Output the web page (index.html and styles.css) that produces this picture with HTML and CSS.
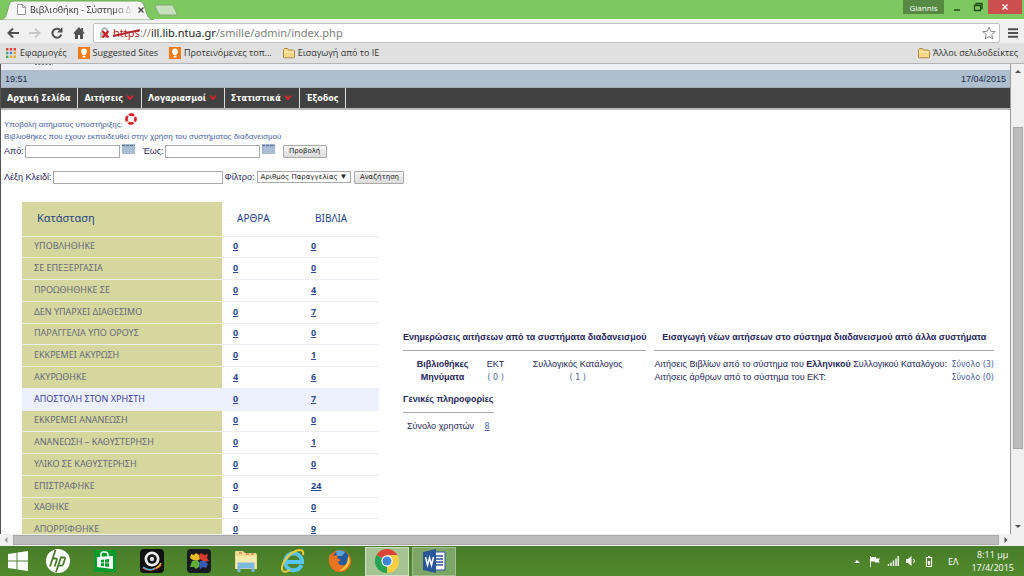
FILE: index.html
```html
<!DOCTYPE html>
<html lang="el">
<head>
<meta charset="utf-8">
<title>Βιβλιοθήκη - Σύστημα Διαδανεισμού</title>
<link rel="stylesheet" href="styles.css">
</head>
<body>
<div class="desktop">
  <header class="titlebar">
    <div class="tab">
      <svg class="tab-shape" viewBox="0 0 160 20" preserveAspectRatio="none"><path d="M0 20C6 19 6 16 8 10C10 3 10 1 15 1H142C148 1 149 3 151 9C153 16 154 19 160 20Z" fill="#f4f5f4" stroke="#6aa653" stroke-width="1"/></svg>
      <svg class="page-icon" viewBox="0 0 9 11"><path d="M.5.5h5l3 3v7h-8zM5.500 .5v3h3" fill="#fff" stroke="#999"/></svg>
      <span class="tab-title">Βιβλιοθήκη - Σύστημα Δια</span>
      <button class="tab-close" aria-label="Κλείσιμο καρτέλας"><svg viewBox="0 0 6 6"><path d="M.5.5l5 5M5.500 .5l-5 5" stroke="#444" stroke-width="1.300"/></svg></button>
    </div>
    <button class="new-tab" aria-label="Νέα καρτέλα"><svg viewBox="0 0 24 12"><path d="M1 1h16q2 0 3 2l3 7q0 1-1 1H7q-2 0-3-2L1 2z" fill="#c6dfbc" stroke="#84ac72"/></svg></button>
    <div class="window-controls">
      <button class="user">Giannis</button>
      <button class="ctl" aria-label="Ελαχιστοποίηση"><svg viewBox="0 0 10 10"><path d="M2 8h6" stroke="#244b19" stroke-width="1.500"/></svg></button>
      <button class="ctl" aria-label="Επαναφορά"><svg viewBox="0 0 10 10"><path d="M1.500 3.500h6v5h-6zM3 3V1.500h6v5H8" fill="none" stroke="#244b19" stroke-width="1.300"/></svg></button>
      <button class="ctl ctl-close" aria-label="Κλείσιμο"><svg viewBox="0 0 10 10"><path d="M2.500 2.500l5 5m0-5l-5 5" stroke="#fff" stroke-width="1.300"/></svg></button>
    </div>
  </header>

  <div class="toolbar">
    <button class="nav" aria-label="Πίσω"><svg viewBox="0 0 12 12"><path d="M12 6H2M6 1.500L1.500 6 6 10.500" fill="none" stroke="#505050" stroke-width="2"/></svg></button>
    <button class="nav" aria-label="Εμπρός"><svg viewBox="0 0 12 12"><path d="M0 6h10M6 1.500L10.500 6 6 10.500" fill="none" stroke="#c8c8c8" stroke-width="2"/></svg></button>
    <button class="nav" aria-label="Ανανέωση"><svg viewBox="0 0 12 12"><path d="M9.500 3.300A4.500 4.500 0 1 0 10.300 7.500" fill="none" stroke="#505050" stroke-width="2"/><path d="M11.500 0v5.500H6z" fill="#505050"/></svg></button>
    <button class="nav" aria-label="Αρχική"><svg viewBox="0 0 12 12"><path d="M6 0L0 6.500h2V12h3V8h2v4h3V6.500h2L10 4.200V1H8.300v1.500z" fill="#505050"/></svg></button>
    <div class="address">
      <svg class="lock" viewBox="0 0 11 12"><path d="M3 6V3.500a2.500 2.500 0 0 1 5 0V6" fill="none" stroke="#aaa" stroke-width="1.500"/><path d="M1 5h8v6H1z" fill="#bbb"/><path d="M3.500 4l6 6.500m0-6.500l-6 6.500" stroke="#d01c1c" stroke-width="2"/></svg>
      <div class="url"><span class="scheme">https<svg viewBox="0 0 28 8" preserveAspectRatio="none"><path d="M0 7L28 1" stroke="#b3272d" stroke-width="1.800"/></svg></span><span class="dim">://</span><b>ill.lib.ntua.gr</b><span class="dim">/smille/admin/index.php</span></div>
      <button class="star" aria-label="Σελιδοδείκτης"><svg viewBox="0 0 14 14"><path d="M7 1l1.700 4.300 4.600.3-3.600 2.900 1.200 4.500L7 10.500 3.100 13l1.200-4.500L.7 5.600l4.600-.3z" fill="#fff" stroke="#888"/></svg></button>
    </div>
    <button class="burger" aria-label="Μενού"><svg viewBox="0 0 10 10"><path d="M0 1.200h10M0 5h10M0 8.800h10" stroke="#505050" stroke-width="2"/></svg></button>
  </div>

  <nav class="bookmarks">
    <a href="#"><svg class="bm" viewBox="0 0 10 10"><g><path d="M0 0h2.400v2.400H0zM3.800 0h2.400v2.400H3.800zM7.600 0H10v2.400H7.600z" fill="#db4437"/><path d="M0 3.800h2.400v2.400H0z" fill="#4aa564"/><path d="M3.800 3.800h2.400v2.400H3.800z" fill="#4285f4"/><path d="M7.600 3.800H10v2.400H7.600zM3.800 7.600h2.400V10H3.800zM7.600 7.600H10V10H7.600z" fill="#e9a92a"/><path d="M0 7.600h2.400V10H0z" fill="#4aa564"/></g></svg>Εφαρμογές</a>
    <a href="#"><svg class="bm-lg" viewBox="0 0 12 12"><path d="M0 0h12v12H0z" fill="#f47a16"/><path d="M6 1.500a3 3 0 0 0-1.700 5.500L4.500 8h3l.2-1A3 3 0 0 0 6 1.500zM4.600 8.800h2.800v1.600H4.600z" fill="#fff"/></svg>Suggested Sites</a>
    <a href="#"><svg class="bm-lg" viewBox="0 0 12 12"><path d="M0 0h12v12H0z" fill="#f47a16"/><path d="M6 1.500a3 3 0 0 0-1.700 5.500L4.500 8h3l.2-1A3 3 0 0 0 6 1.500zM4.600 8.800h2.800v1.600H4.600z" fill="#fff"/></svg>Προτεινόμενες τοπ...</a>
    <a href="#"><svg class="bm-lg" viewBox="0 0 12 12"><path d="M.5 10V2.500l1-1h3l1 1.500h5l1 1V10q0 .8-.8.8H1.300Q.5 10.800.5 10z" fill="#f7d789" stroke="#b08a3c"/><path d="M1 5h10" stroke="#fff0bd"/></svg>Εισαγωγή από το IE</a>
    <a href="#" class="other"><svg class="bm-lg" viewBox="0 0 12 12"><path d="M.5 10V2.500l1-1h3l1 1.500h5l1 1V10q0 .8-.8.8H1.300Q.5 10.800.5 10z" fill="#f7d789" stroke="#b08a3c"/><path d="M1 5h10" stroke="#fff0bd"/></svg>Άλλοι σελιδοδείκτες</a>
  </nav>

  <div class="viewport">
    <main class="page">
      <div class="strip"><svg viewBox="0 0 18 2"><path d="M0 .5h18" stroke="#777" stroke-dasharray="2 1.500"/></svg></div>
      <div class="datebar"><span>19:51</span><span>17/04/2015</span></div>
      <nav class="menu">
        <a href="#">Αρχική Σελίδα</a>
        <a href="#">Αιτήσεις <svg viewBox="0 0 8 6"><path d="M0 .5h2L4 2 6 .5h2L4 5.500z" fill="#d8232a"/></svg></a>
        <a href="#">Λογαριασμοί <svg viewBox="0 0 8 6"><path d="M0 .5h2L4 2 6 .5h2L4 5.500z" fill="#d8232a"/></svg></a>
        <a href="#">Στατιστικά <svg viewBox="0 0 8 6"><path d="M0 .5h2L4 2 6 .5h2L4 5.500z" fill="#d8232a"/></svg></a>
        <a href="#">Έξοδος</a>
      </nav>
      <div class="links">
        <a href="#">Υποβολή αιτήματος υποστήριξης: <svg viewBox="0 0 12 12"><circle cx="6" cy="6" r="4.500" fill="none" stroke="#f3c3c3" stroke-width="2.600"/><circle cx="6" cy="6" r="4.500" fill="none" stroke="#d91c24" stroke-width="2.600" stroke-dasharray="5 2.070" stroke-dashoffset="2.500"/></svg></a>
        <a href="#">Βιβλιοθήκες που έχουν εκπαιδευθεί στην χρήση του συστήματος διαδανεισμού</a>
      </div>
      <form class="row dates">
        <label for="from">Από:</label><input id="from" class="date" type="text">
        <button type="button" class="cal" aria-label="Ημερολόγιο από"><svg viewBox="0 0 13 10"><path d="M0 0h13v10H0z" fill="#a3b9d2"/><path d="M0 1.500h13" stroke="#5d7693" stroke-dasharray="3 1"/><path d="M2 4.500h10M2 6.500h10M2 8.500h10" stroke="#b6c8dc" stroke-dasharray="2 1"/></svg></button>
        <label for="to">Έως:</label><input id="to" class="date" type="text">
        <button type="button" class="cal" aria-label="Ημερολόγιο έως"><svg viewBox="0 0 13 10"><path d="M0 0h13v10H0z" fill="#a3b9d2"/><path d="M0 1.500h13" stroke="#5d7693" stroke-dasharray="3 1"/><path d="M2 4.500h10M2 6.500h10M2 8.500h10" stroke="#b6c8dc" stroke-dasharray="2 1"/></svg></button>
        <button type="button" class="btn show">Προβολή</button>
      </form>
      <form class="row search">
        <label for="key">Λέξη Κλειδί:</label><input id="key" class="key" type="text">
        <label for="filter">Φίλτρο:</label><span class="select"><select id="filter"><option>Αριθμός Παραγγελίας</option></select></span>
        <button type="button" class="btn find">Αναζήτηση</button>
      </form>

      <div class="content">
        <table class="status">
          <thead><tr><th>Κατάσταση</th><th>ΑΡΘΡΑ</th><th>ΒΙΒΛΙΑ</th></tr></thead>
          <tbody>
            <tr><td>ΥΠΟΒΛΗΘΗΚΕ</td><td><a href="#">0</a></td><td><a href="#">0</a></td></tr>
            <tr><td>ΣΕ ΕΠΕΞΕΡΓΑΣΙΑ</td><td><a href="#">0</a></td><td><a href="#">0</a></td></tr>
            <tr><td>ΠΡΟΩΘΗΘΗΚΕ ΣΕ</td><td><a href="#">0</a></td><td><a href="#">4</a></td></tr>
            <tr><td>ΔΕΝ ΥΠΑΡΧΕΙ ΔΙΑΘΕΣΙΜΟ</td><td><a href="#">0</a></td><td><a href="#">7</a></td></tr>
            <tr><td>ΠΑΡΑΓΓΕΛΙΑ ΥΠΟ ΟΡΟΥΣ</td><td><a href="#">0</a></td><td><a href="#">0</a></td></tr>
            <tr><td>ΕΚΚΡΕΜΕΙ ΑΚΥΡΩΣΗ</td><td><a href="#">0</a></td><td><a href="#">1</a></td></tr>
            <tr><td>ΑΚΥΡΩΘΗΚΕ</td><td><a href="#">4</a></td><td><a href="#">6</a></td></tr>
            <tr class="hover"><td>ΑΠΟΣΤΟΛΗ ΣΤΟΝ ΧΡΗΣΤΗ</td><td><a href="#">0</a></td><td><a href="#">7</a></td></tr>
            <tr><td>ΕΚΚΡΕΜΕΙ ΑΝΑΝΕΩΣΗ</td><td><a href="#">0</a></td><td><a href="#">0</a></td></tr>
            <tr><td>ΑΝΑΝΕΩΣΗ – ΚΑΘΥΣΤΕΡΗΣΗ</td><td><a href="#">0</a></td><td><a href="#">1</a></td></tr>
            <tr><td>ΥΛΙΚΟ ΣΕ ΚΑΘΥΣΤΕΡΗΣΗ</td><td><a href="#">0</a></td><td><a href="#">0</a></td></tr>
            <tr><td>ΕΠΙΣΤΡΑΦΗΚΕ</td><td><a href="#">0</a></td><td><a href="#">24</a></td></tr>
            <tr><td>ΧΑΘΗΚΕ</td><td><a href="#">0</a></td><td><a href="#">0</a></td></tr>
            <tr><td>ΑΠΟΡΡΙΦΘΗΚΕ</td><td><a href="#">0</a></td><td><a href="#">9</a></td></tr>
          </tbody>
        </table>

        <div class="panels">
          <section class="updates">
            <h2>Ενημερώσεις αιτήσεων από τα συστήματα διαδανεισμού</h2>
            <table class="messages">
              <tr><th>Βιβλιοθήκες</th><td>ΕΚΤ</td><td>Συλλογικός Κατάλογος</td></tr>
              <tr><th>Μηνύματα</th><td><a href="#">( 0 )</a></td><td><a href="#">( 1 )</a></td></tr>
            </table>
            <div class="general">
              <h2>Γενικές πληροφορίες</h2>
              <p>Σύνολο χρηστών <a href="#">8</a></p>
            </div>
          </section>
          <section class="imports">
            <h2>Εισαγωγή νέων αιτήσεων στο σύστημα διαδανεισμού από άλλα συστήματα</h2>
            <div class="line"><span>Αιτήσεις Βιβλίων από το σύστημα του <b>Ελληνικού</b> Συλλογικού Καταλόγου:</span><a href="#">Σύνολο (3)</a></div>
            <div class="line"><span>Αιτήσεις άρθρων από το σύστημα του ΕΚΤ:</span><a href="#">Σύνολο (0)</a></div>
          </section>
        </div>
      </div>
    </main>
    <div class="vscroll">
      <svg viewBox="0 0 6 4"><path d="M0 4l3-3 3 3z" fill="#505050"/></svg>
      <div class="vtrack"><div class="vthumb"></div></div>
      <svg viewBox="0 0 6 4"><path d="M0 0l3 3 3-3z" fill="#505050"/></svg>
    </div>
  </div>
  <div class="hscroll">
    <svg viewBox="0 0 4 6"><path d="M3.500 0l-3 3 3 3z" fill="#999"/></svg>
    <div class="hthumb"></div>
    <svg viewBox="0 0 4 6"><path d="M.5 0l3 3-3 3z" fill="#505050"/></svg>
  </div>

  <footer class="taskbar">
    <button class="start" aria-label="Έναρξη"><svg viewBox="0 0 20 20"><path d="M0 3l8.500-1.200v7.700H0zM9.500 1.600L20 0v9.500H9.500zM0 10.500h8.500v7.700L0 17zM9.500 10.500H20V20L9.500 18.400z" fill="#fff"/></svg></button>
    <button class="task" aria-label="HP"><svg viewBox="0 0 24 24"><circle cx="12" cy="12" r="12" fill="#fff"/><path d="M9.500 1L4 17.500M6.800 9.500h3q1.500 0 1 1.500L8.600 17.500M15.300 7.500L10 23M15.300 8.500H18q1.500 0 1 1.500l-2 5.500q-.4 1.200-1.500 1.200h-2.800" fill="none" stroke="#477c2b" stroke-width="1.800"/></svg></button>
    <button class="task" aria-label="Store"><svg viewBox="0 0 24 24"><path d="M1 1h22v22H1z" fill="#009b2c"/><path d="M4 8l16-1v13L4 18z" fill="#fff"/><path d="M8 8V5q0-2 2-2h2q3 0 3 3v2" fill="none" stroke="#fff" stroke-width="1.400"/><path d="M8 11l3-.4v3H8zM12 10.500l4-.5v3.600h-4zM8 14.300h3v3L8 17zM12 14.300h4V18l-4-.6z" fill="#009b2c"/></svg></button>
    <button class="task" aria-label="YouCam"><svg viewBox="0 0 24 24"><rect width="24" height="24" rx="4" fill="#111"/><path d="M3 19q9 5 18-3" fill="none" stroke="#df4848" stroke-width="1.800"/><path d="M3 18q7 5 12 1" fill="none" stroke="#48bbdb" stroke-width="1.500"/><path d="M16 19q3-1 5-5" fill="none" stroke="#e5bb35" stroke-width="1.500"/><circle cx="12" cy="10" r="7.500" fill="#eee"/><circle cx="12" cy="10" r="4.800" fill="#111"/><circle cx="12" cy="10" r="2.200" fill="#ddd"/></svg></button>
    <button class="task" aria-label="Media"><svg viewBox="0 0 24 24"><rect width="24" height="24" rx="4" fill="#171923"/><path d="M4 5l3 1 2-2 3 2 1 4-3 2-4-1-3-2z" fill="#e9bd23"/><path d="M12 6l2-2 3 2 4-1-1 4 2 3-5 1-4-3z" fill="#d73c30"/><path d="M5 12l5-1 3 3-1 4-3 2-2-2-4 0z" fill="#62ad38"/><path d="M13 12l5 0 3 3-2 4-3-1-3 2-1-4z" fill="#385ab9"/></svg></button>
    <button class="task" aria-label="Αρχεία"><svg viewBox="0 0 24 24"><path d="M1 3q0-1 1-1h7l2 2h10q2 0 2 2v14H1z" fill="#eed991"/><path d="M2 7h20v13H2z" fill="#fae9ad"/><path d="M5 4h3M12 5h3M17 5h3" stroke="#d65543"/><path d="M5 23v-8h14v8M5 18h14" fill="none" stroke="#79b9dc" stroke-width="3"/></svg></button>
    <button class="task" aria-label="Internet Explorer"><svg viewBox="0 0 24 24"><path d="M20.500 16A8.500 8.500 0 1 1 21 11.500v1.600H6" fill="none" stroke="#56c5f3" stroke-width="4"/><path d="M2 22C-2 17 8 2 19 1q4 0 3 5" fill="none" stroke="#f4cb37" stroke-width="2"/><path d="M2 22q2 2 7-1" fill="none" stroke="#f4cb37" stroke-width="2"/></svg></button>
    <button class="task" aria-label="Firefox"><svg viewBox="0 0 24 24"><circle cx="12" cy="12" r="11" fill="#e66a1d"/><circle cx="13" cy="9.500" r="8" fill="#245a9c"/><path d="M8 2q5-2 9 1l-3 4-5 0z" fill="#58a5d8"/><path d="M2 5l3 2 5-1-1 3 4 2-3 2q1 4 7 3 5-2 4-9 4 7-1 12-6 6-13 2Q-2 15 2 5z" fill="#ec7320"/><path d="M20 7q3 4 1 8-3 7-10 7 9-5 9-15z" fill="#f7c63b"/></svg></button>
    <button class="task active" aria-label="Chrome"><svg viewBox="0 0 24 24"><path d="M12 12L1.600 6A12 12 0 0 1 22.400 6z" fill="#dc4437"/><path d="M12 12L22.400 6A12 12 0 0 1 12 24z" fill="#ffcd40"/><path d="M12 12v12A12 12 0 0 1 1.600 6z" fill="#26a255"/><path d="M12 6h10.400L17.200 15 12 24l2-8z" fill="#ffcd40"/><circle cx="12" cy="12" r="5.700" fill="#fff"/><circle cx="12" cy="12" r="4.500" fill="#4285d8"/></svg></button>
    <button class="task open" aria-label="Word"><svg viewBox="0 0 24 24"><path d="M12 3h11v18H12z" fill="#fff" stroke="#2a579a"/><path d="M13 7h8M13 10h8M13 13h8M13 16h8" stroke="#2a579a" stroke-width="1.500"/><path d="M1 3l13-3v24L1 21z" fill="#2a579a"/><path d="M3.500 8l2 8 2-7 2 7 2-8" fill="none" stroke="#fff" stroke-width="1.600"/></svg></button>
    <div class="tray">
      <svg viewBox="0 0 12 12"><path d="M3 8l3-3 3 3z" fill="#fff"/></svg>
      <svg viewBox="0 0 12 12"><path d="M1.500 1v11" stroke="#fff"/><path d="M2 2h5v1.500h4L9.500 5.500l1.500 2H6V6.500H2z" fill="#fff"/></svg>
      <svg viewBox="0 0 12 12"><path d="M1.500 9v2M4 7.500V11M6.500 5.500V11M9 3.500V11M11.200 1v10" stroke="#fff" stroke-width="1.400"/></svg>
      <svg viewBox="0 0 12 12"><path d="M1 4h2l3.500-3v10L3 8H1z" fill="#fff"/><path d="M8.500 4q2 2 0 4" fill="none" stroke="#fff"/></svg>
      <svg viewBox="0 0 12 12"><path d="M3.500 2.500h5v9h-5zM5 1.500h2" fill="none" stroke="#fff" stroke-width="1.200"/><path d="M5 6h2v4H5z" fill="#fff"/></svg>
      <span class="lang">ΕΛ</span>
      <time class="clock"><span>8:11 μμ</span><span>17/4/2015</span></time>
    </div>
  </footer>
</div>
</body>
</html>
```
FILE: styles.css
```css
* { box-sizing: border-box; }
body { margin: 0; font-family: "Liberation Sans", Arial, sans-serif; color: #26265c; }
button { border: 0; padding: 0; background: none; font: inherit; color: inherit; }
a { text-decoration: none; color: inherit; }
svg { display: block; flex: none; }

.desktop { display: flex; flex-direction: column; height: 100vh; overflow: hidden; background: #fff; }

.titlebar { display: flex; flex: none; height: 19px; background: #7dc860; font-family: "Open Sans", sans-serif; font-size: 9px; }
.tab { position: relative; display: flex; align-items: center; width: 154px; padding: 0 10px 0 17px; gap: 4px; }
.tab-shape { position: absolute; left: 0; top: 0; width: 100%; height: 20px; }
.page-icon { position: relative; width: 9px; height: 11px; }
.tab-title { position: relative; flex: 1; overflow: hidden; white-space: nowrap; color: #333; -webkit-mask-image: linear-gradient(90deg, #000 80%, transparent); mask-image: linear-gradient(90deg, #000 80%, transparent); }
.tab-close { position: relative; }
.tab-close svg { width: 6px; height: 6px; }
.new-tab { align-self: flex-start; padding-top: 4px; }
.new-tab svg { width: 24px; height: 12px; }
.window-controls { display: flex; align-items: flex-start; margin-left: auto; padding-right: 2px; }
.user { width: 41px; height: 14px; margin-right: 2px; background: #568a42; color: #fff; font-size: 8px; }
.ctl { display: flex; align-items: center; justify-content: center; width: 21px; height: 14px; }
.ctl svg { width: 10px; height: 10px; }
.ctl-close { width: 34px; background: #c9504e; }

.toolbar { display: flex; flex: none; align-items: center; gap: 10px; height: 24px; padding: 2px 6px 0 7px; background: #f0f0f0; border-top: 1px solid #fafafa; }
.nav svg { width: 12px; height: 12px; }
.address { display: flex; flex: 1; align-items: center; height: 20px; margin: 0 -2px; padding: 0 3px 0 5px; background: #fff; border: 1px solid #c0c0c0; border-radius: 2px; }
.lock { width: 11px; height: 12px; margin-right: 3px; }
.url { flex: 1; font-family: "Noto Sans", sans-serif; font-size: 11px; line-height: 16px; color: #222; }
.url b { font-weight: 400; }
.dim { color: #808080; }
.scheme { position: relative; display: inline-block; color: #b3272d; }
.scheme svg { position: absolute; left: 0; top: 4px; width: 100%; height: 8px; }
.star svg { width: 14px; height: 14px; }
.burger svg { width: 10px; height: 10px; }

.bookmarks { display: flex; flex: none; align-items: center; gap: 11px; height: 21px; padding: 0 6px 1px; background: #e0e0e0; border-bottom: 1px solid #b5b5b5; font-family: "Open Sans", sans-serif; font-size: 9px; color: #333; }
.bookmarks a { display: flex; align-items: center; gap: 3px; white-space: nowrap; }
.bookmarks .other { margin-left: auto; }
.bm { width: 10px; height: 10px; margin-right: 1px; }
.bm-lg { width: 12px; height: 12px; }

.viewport { display: flex; flex: 1; min-height: 0; }
.page { flex: 1; min-width: 0; overflow: hidden; border-left: 1px solid #555; border-right: 1px solid #999; font-size: 9px; }
.strip { height: 6px; padding-left: 34px; background: #edf1f7; }
.strip svg { width: 18px; height: 2px; }
.datebar { display: flex; align-items: center; justify-content: space-between; height: 18px; padding: 0 4px; background: #afbfcf; color: #1d2a4a; border-bottom: 1px solid #a2aab2; }
.menu { display: flex; height: 22px; background: #414141; border-bottom: 2px solid #b9b9b9; color: #fff; font-family: "DejaVu Sans", Verdana, sans-serif; font-size: 8px; font-weight: 700; }
.menu a { display: flex; align-items: center; gap: 3px; padding: 0 7px 0 6px; border-right: 1px solid #ddd; white-space: nowrap; }
.menu svg { width: 8px; height: 6px; }

.links { display: flex; flex-direction: column; align-items: flex-start; padding: 3px 3px 0; font-size: 8px; line-height: 12px; color: #4a64a3; }
.links a { display: flex; align-items: flex-end; gap: 2px; white-space: nowrap; }
.links svg { width: 12px; height: 12px; margin-bottom: 6px; }
.row { display: flex; align-items: center; padding: 0 3px; white-space: nowrap; }
.dates { height: 16px; }
.search { height: 16px; margin-top: 10px; }
.row input { height: 13px; padding: 0 2px; border: 1px solid #a9a9a9; background: #fff; font-size: 9px; }
.date { width: 95px; margin: 0 2px 0 1px; }
.cal { margin: 0 8px 4px 0; }
.cal svg { width: 13px; height: 10px; }
.key { width: 170px; margin: 0 2px 0 1px; }
.btn { height: 13px; border: 1px solid #aaa; border-radius: 1px; background: linear-gradient(#f5f5f5, #dcdcdc); color: #222; font-family: "DejaVu Sans", sans-serif; font-size: 7px; }
.show { width: 44px; }
.find { width: 50px; margin-left: 2px; }
.select { position: relative; display: flex; margin: 0 1px 0 3px; }
.select::after { content: "▼"; position: absolute; right: 4px; top: 1px; color: #222; font-size: 8px; line-height: 9px; pointer-events: none; }
.select select { appearance: none; width: 94px; height: 12px; padding: 0 2px; border: 1px solid #aaa; border-radius: 0; background: #fff; color: #222; font-family: "DejaVu Sans", sans-serif; font-size: 7px; }

.content { display: flex; align-items: flex-start; gap: 24px; padding: 17px 16px 0 21px; }
.status { flex: none; width: 357px; height: 339px; table-layout: fixed; border-collapse: collapse; font-family: "Noto Sans", sans-serif; font-size: 9px; }
.status th, .status td { padding: 0 11px 1px; border-bottom: 1px solid #eeeef6; text-align: left; line-height: 14px; white-space: nowrap; }
.status thead tr { height: 34px; }
.status th { padding-left: 15px; color: #1f4487; font-size: 10px; font-weight: 400; }
.status th:first-child { width: 200px; font-size: 11px; }
.status th:nth-child(2) { width: 78px; }
.status th:first-child, .status td:first-child { background: #d6d79e; }
.status td:first-child { padding-left: 12px; }
.status td { color: #69697a; }
.status td a { color: #2c4a87; font-weight: 700; text-decoration: underline; }
.status .hover td, .status .hover td:first-child { background: #edf1fe; color: #3a3a9a; }

.panels { display: flex; flex: 1; align-items: flex-start; gap: 8px; padding-top: 128px; }
.panels h2 { margin: 0 0 7px; padding-bottom: 6px; border-bottom: 1px solid #a8a8a8; font-size: 9px; line-height: 14px; text-align: center; white-space: nowrap; }
.updates { flex: none; }
.messages { width: 100%; border-collapse: collapse; text-align: center; line-height: 13px; }
.messages th, .messages td { padding: 0; }
.messages a, .general a, .line a { color: #4a64a3; font-family: "DejaVu Sans", sans-serif; font-size: 8px; }
.general { display: inline-block; margin-top: 8px; }
.general p { margin: 0; text-align: center; line-height: 13px; }
.general a { margin-left: 8px; text-decoration: underline; }
.imports { flex: 1; }
.line { display: flex; justify-content: space-between; line-height: 13px; white-space: nowrap; }

.vscroll { display: flex; flex: none; flex-direction: column; align-items: center; width: 13px; padding: 5px 0; background: #f0f0f0; }
.vscroll svg { width: 6px; height: 4px; }
.vtrack { flex: 1; width: 10px; padding-top: 54px; }
.vthumb { height: 81%; background: #bcbcbc; border: 1px solid #a8a8a8; }
.hscroll { display: flex; flex: none; align-items: center; gap: 5px; height: 12px; padding: 0 16px 0 4px; background: #f0f0f0; }
.hscroll svg { width: 4px; height: 6px; }
.hthumb { flex: 1; height: 10px; background: #bcbcbc; border: 1px solid #a8a8a8; }

.taskbar { display: flex; flex: none; align-items: center; height: 30px; padding-left: 8px; background: linear-gradient(#477b29, #518a2d); color: #fff; font-family: "Open Sans", sans-serif; font-size: 9px; }
.start { width: 28px; }
.start svg { width: 20px; height: 20px; }
.task { display: flex; align-items: center; justify-content: center; width: 44px; height: 29px; margin-right: 3px; border: 1px solid transparent; }
.task svg { width: 24px; height: 24px; }
.active { background: #a6c394; border-color: #d0dfc6; }
.open { background: #7da566; border-color: #a1bf90; }
.tray { display: flex; align-items: center; gap: 6px; margin-left: auto; padding-right: 10px; }
.tray svg { width: 12px; height: 12px; }
.lang { margin: 0 7px; }
.clock { display: flex; flex-direction: column; align-items: center; line-height: 13px; }
```
